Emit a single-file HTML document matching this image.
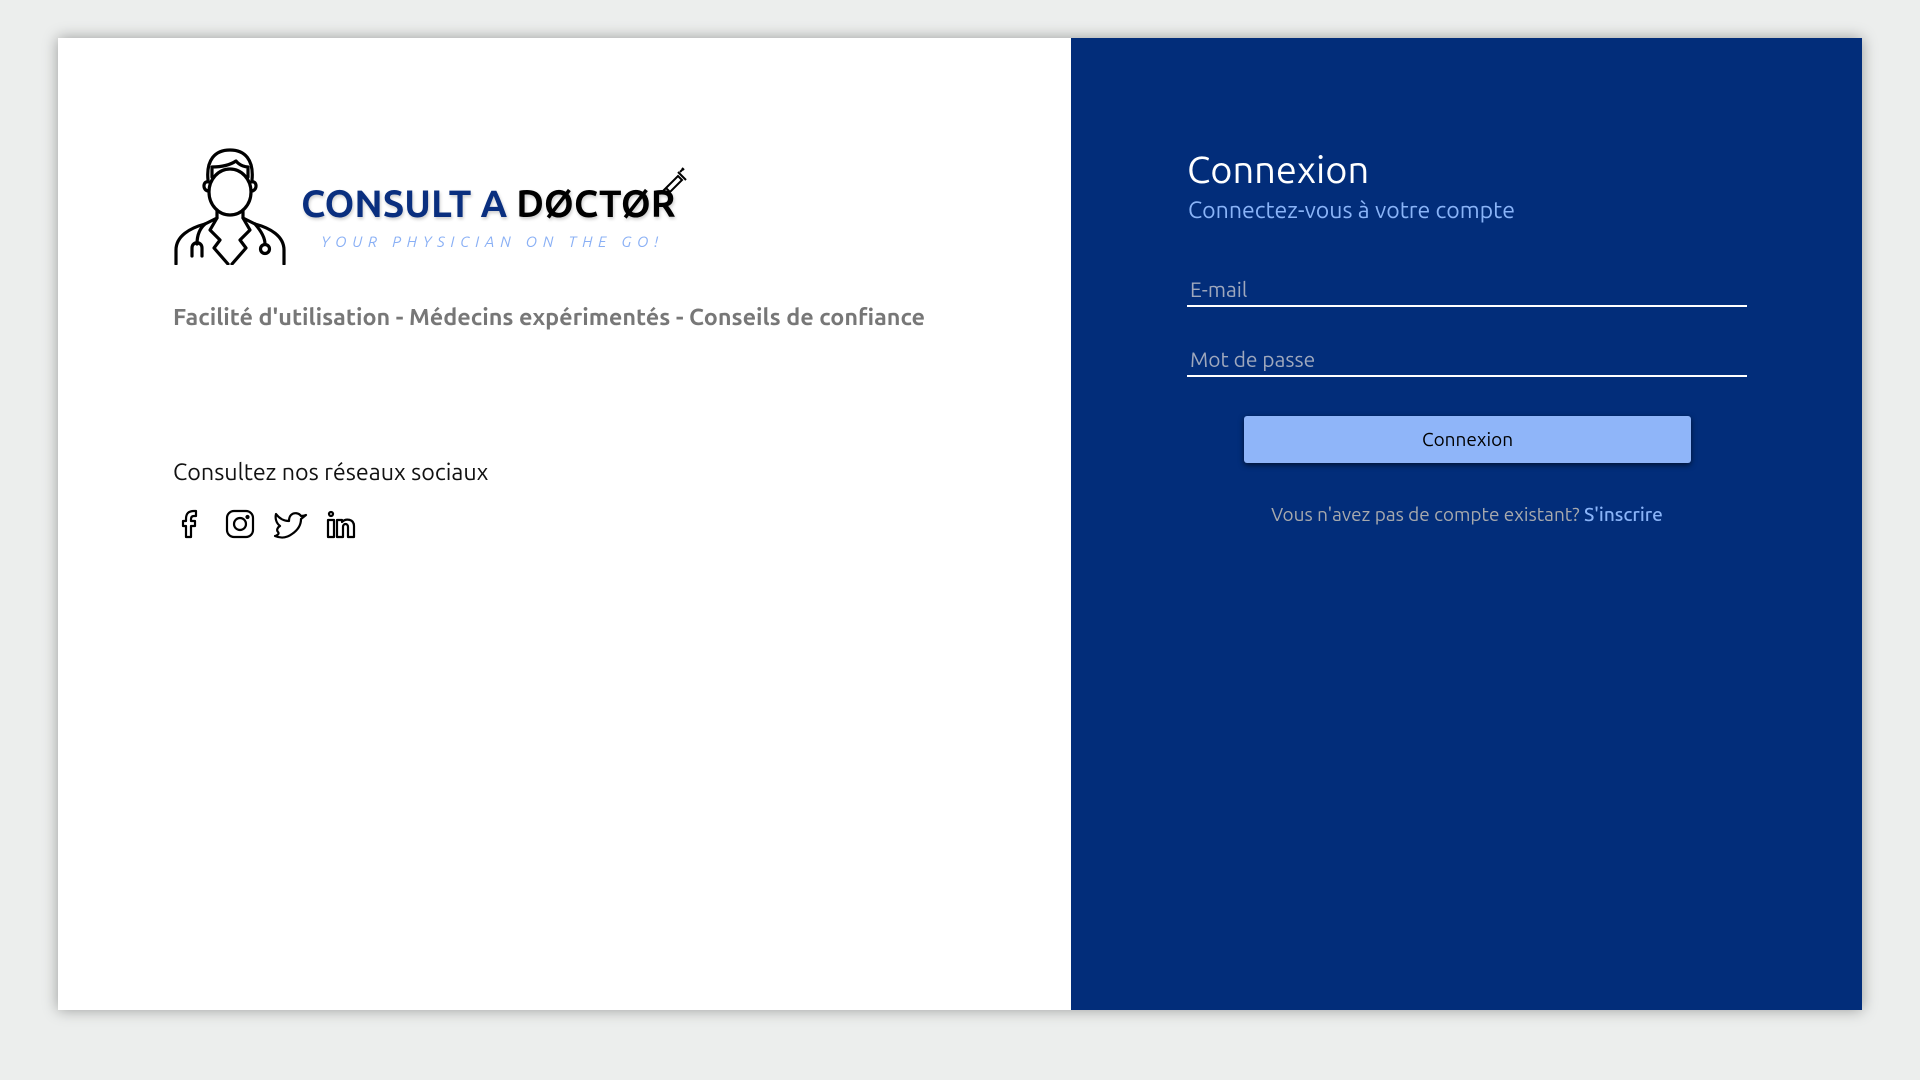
<!DOCTYPE html>
<html><head><meta charset="utf-8"><style>
*{margin:0;padding:0;box-sizing:border-box}
body{width:1920px;height:1080px;background:#eceeed;font-family:"Ubuntu","Liberation Sans","DejaVu Sans",sans-serif;position:relative;overflow:hidden}
.card{position:absolute;left:58px;top:38px;width:1804px;height:972px;background:#fff;box-shadow:0 0 14px rgba(0,0,0,.35)}
.blue{position:absolute;left:1071px;top:38px;width:791px;height:972px;background:#022d7a}
.abs{position:absolute;white-space:nowrap}
.line{position:absolute;left:1187px;width:560px;height:2px;background:#fff}
</style></head><body>
<div class="card"></div>
<div class="blue"></div>
<svg class="abs" style="left:170px;top:140px" width="120" height="125" viewBox="0 0 120 125" fill="none" stroke="#000" stroke-width="3.2" stroke-linejoin="round" stroke-linecap="round">
<path d="M38 40 C36 20 45 10 60 10 C75 10 84 20 82 40"/>
<path d="M42 37 L42 27 C52 27 60 25 66 21 C70 26 76 27 78 27 L78 37"/>
<ellipse cx="60" cy="52" rx="21" ry="23"/>
<path d="M39 42 C33 40 32 50 38 51 M81 42 C87 40 88 50 82 51"/>
<path d="M47 71 L47 78 L35 84 C20 88 6 96 6 110 L6 124 M73 71 L73 78 L85 84 C100 88 114 96 114 110 L114 124"/>
<path d="M47 78 L40 90 L50 100 L44 108 L58 124 M73 78 L80 90 L70 100 L76 108 L62 124"/>
<path d="M35 84 C28 90 27 98 27 104 M85 84 C92 92 95 98 95 104"/>
<path d="M22 116 L22 108 C22 101 32 101 32 108 L32 116"/>
<circle cx="95" cy="109" r="4.5"/>
</svg>
<div class="abs" style="left:301px;top:183px;font-size:38px;font-weight:bold;color:#0a2f7f;text-shadow:1px 2px 3px rgba(0,0,0,.2)">CONSULT A <span style="color:#000">DØCTØR</span></div>
<svg class="abs" style="left:660px;top:166px" width="28" height="28" viewBox="0 0 28 28" fill="none" stroke="#000" stroke-width="2"><path d="M3 25 L8 20 M6 22 L18 10 L22 14 L10 26 Z M18 6 L26 14 M22 2 L24 4 M23 3 L20 6"/></svg>
<div class="abs" style="left:321px;top:233px;font-size:15px;font-style:italic;color:#8ab0f5;letter-spacing:5.8px">YOUR PHYSICIAN ON THE GO!</div>
<div class="abs" style="left:173px;top:304px;font-size:23.4px;font-weight:bold;color:#777">Facilité d'utilisation - Médecins expérimentés - Conseils de confiance</div>
<div class="abs" style="left:173px;top:459px;font-size:23.3px;color:#111">Consultez nos réseaux sociaux</div>
<svg class="abs" style="left:176px;top:508px" width="200" height="32" viewBox="0 0 200 32" fill="none" stroke="#000" stroke-width="2.2" stroke-linejoin="round">
<path d="M18 3 C12 3 10 6 10 11 L10 13 L7 13 L7 18 L10 18 L10 29 L15 29 L15 18 L19 18 L19 13 L15 13 L15 11 C15 9 16 8 18 8 L20 8 L20 3 Z"/>
<rect x="51" y="3" width="26" height="26" rx="7"/><circle cx="64" cy="16" r="6"/><circle cx="71.5" cy="9" r="1" fill="#000"/>
<path d="M130 7 C128 8 126 8 125 8 C123 5 118 4 115 7 C113 9 113 11 113 13 C107 13 103 10 100 6 C99 10 100 15 104 18 C102 19 100 22 102 24 C104 26 100 28 99 28 C106 31 112 29 116 26 C122 22 125 17 125 11 L130 7 Z"/>
<circle cx="155" cy="6" r="2"/><path d="M152 12 L158 12 L158 29 L152 29 Z M161 12 L166 12 L166 14 C170 10 178 11 178 18 L178 29 L172 29 L172 19 C172 15 167 15 167 19 L167 29 L161 29 Z"/>
</svg>
<div class="abs" style="left:1187px;top:149px;font-size:38px;color:#fff">Connexion</div>
<div class="abs" style="left:1188px;top:197px;font-size:23.1px;color:#8ab4f8">Connectez-vous à votre compte</div>
<div class="abs" style="left:1190px;top:277px;font-size:21px;color:#9fa8bd">E-mail</div>
<div class="line" style="top:305px"></div>
<div class="abs" style="left:1190px;top:347px;font-size:21px;color:#9fa8bd">Mot de passe</div>
<div class="line" style="top:375px"></div>
<div class="abs" style="left:1244px;top:416px;width:447px;height:47px;background:#8fb5f9;border-radius:3px;box-shadow:0 2px 6px rgba(0,0,0,.6);text-align:center;line-height:47px;font-size:19px;color:#000">Connexion</div>
<div class="abs" style="left:1167px;width:600px;top:503px;text-align:center;font-size:19px;color:#a7a9ad">Vous n'avez pas de compte existant? <span style="color:#8ab4f8;font-weight:500">S'inscrire</span></div>
</body></html>
